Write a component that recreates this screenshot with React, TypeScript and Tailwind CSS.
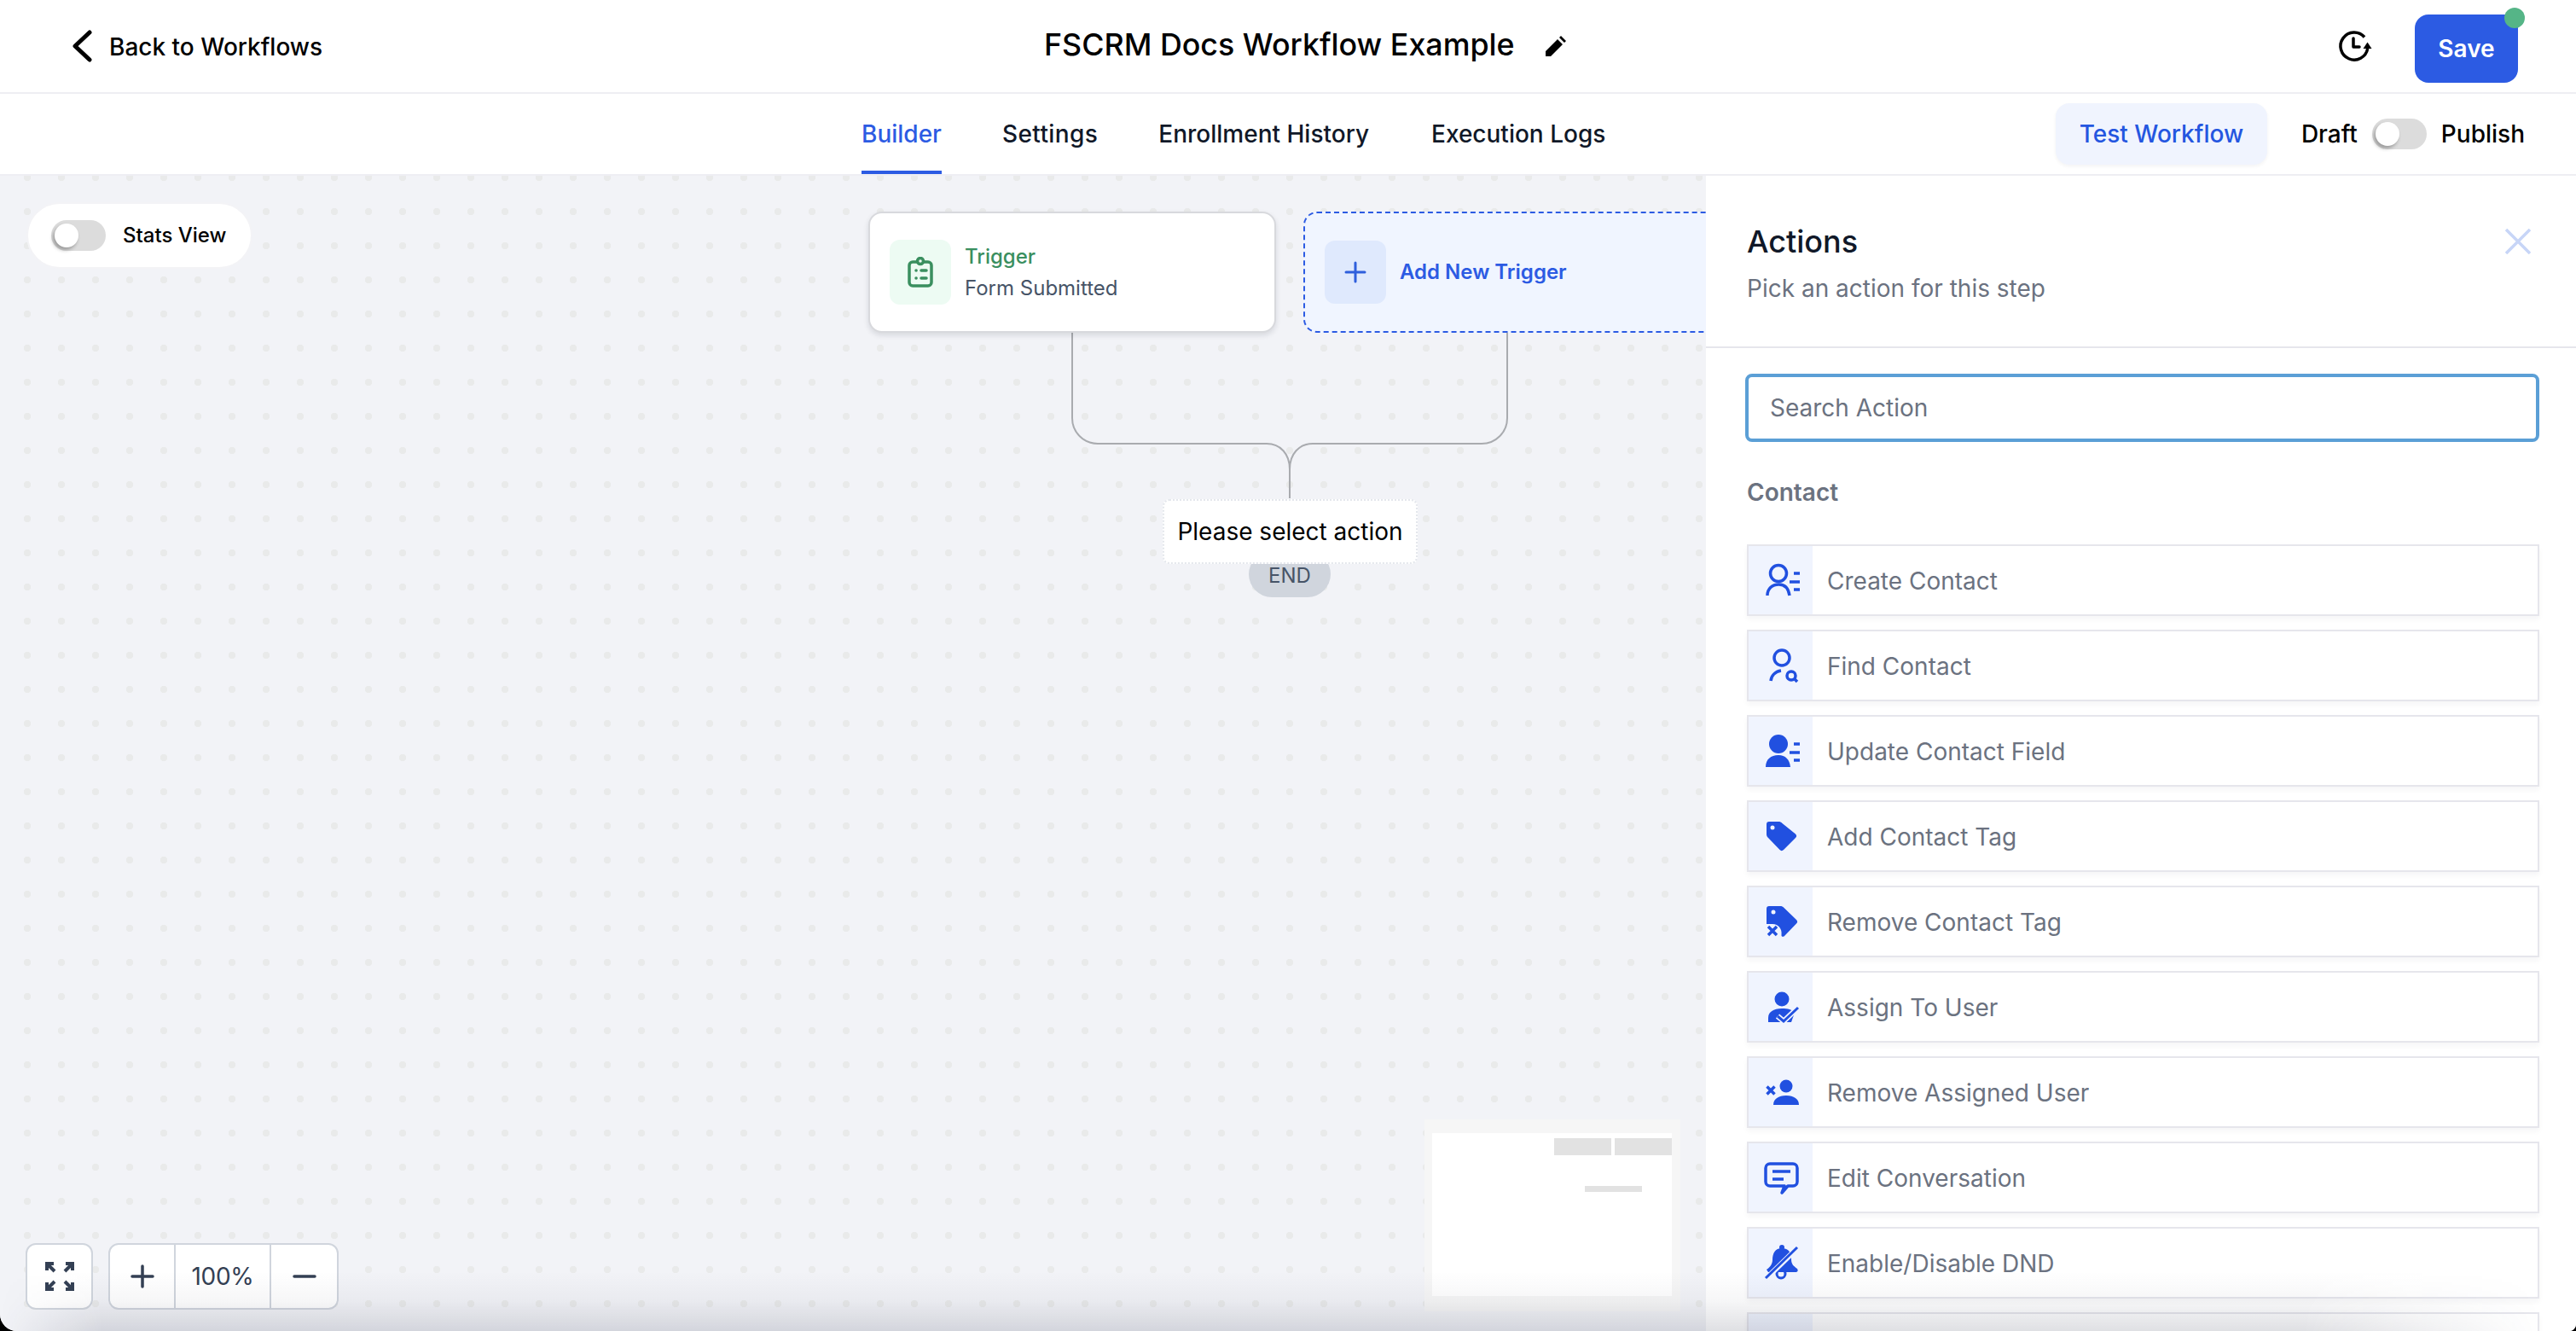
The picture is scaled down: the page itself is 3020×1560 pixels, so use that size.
import React from "react";

const BLUE = "#2150e0";
const CELL = "#f0f4fe";

function Toggle() {
  return (
    <div className="flex h-[36px] w-[64px] shrink-0 items-center rounded-full bg-[#dcdcdc] pl-[4px]">
      <div className="h-[28px] w-[28px] rounded-full bg-white shadow-[-2px_3px_4px_rgba(0,0,0,0.3)]" />
    </div>
  );
}

function Glyph({ children }: { children: React.ReactNode }) {
  return (
    <svg width="48" height="48" viewBox="0 0 48 48" fill="none" stroke={BLUE} strokeWidth="3.5">
      {children}
    </svg>
  );
}

const icons: Record<string, React.ReactNode> = {
  create: (
    <Glyph>
      <circle cx="21" cy="16" r="9.5" strokeWidth="3.5" />
      <path d="M8 42c0-8 5.500-13 13.500-13 6.500 0 11 3.500 12.500 13" />
      <path d="M39 16h7M34 26h12M39 35h7" />
    </Glyph>
  ),
  find: (
    <Glyph>
      <circle cx="25" cy="15" r="9" />
      <path d="M12 42c.500-6 5-11 12-12" />
      <circle cx="36" cy="36" r="5" />
      <path d="M39.500 39.500L43 43" />
    </Glyph>
  ),
  update: (
    <Glyph>
      <circle cx="21" cy="16" r="11" fill={BLUE} stroke="none" />
      <path d="M6 43c0-9 6-14 15-14 8 0 13 5 14 14z" fill={BLUE} stroke="none" />
      <path d="M39 16h7M34 26h12M39 35h7" />
    </Glyph>
  ),
  tag: (
    <Glyph>
      <path d="M10 7h11c2 0 3 .5 4.500 2L41 21.500c1.500 1.500 1.500 3 0 4.500L27 40c-1.500 1.500-3 1.500-4.500 0L9 26c-1.500-1.500-2-2.500-2-4.500V10c0-2 1-3 3-3z" fill={BLUE} stroke="none" />
      <circle cx="14" cy="14" r="2.500" fill={CELL} stroke="none" />
    </Glyph>
  ),
  untag: (
    <Glyph>
      <path d="M10 6h13c2 0 3 .5 4.500 2L42 22c1.500 1.500 1.500 3 0 4.500L28 41c-1.500 1.500-4 1-3.500-1.500C25.500 33 21 27 14 27H7V9c0-2 1-3 3-3z" fill={BLUE} stroke="none" />
      <circle cx="15" cy="13" r="2.500" fill={CELL} stroke="none" />
      <path d="M9 30l10 10M19 30L9 40" />
    </Glyph>
  ),
  assign: (
    <Glyph>
      <circle cx="25" cy="15" r="8.500" fill={BLUE} stroke="none" />
      <path d="M9 42v-5c0-7 6-11 16-11 7 0 12 1 15 5l-4 11z" fill={BLUE} stroke="none" />
      <path d="M20 35l7 6 17-16" stroke={CELL} strokeWidth="6.500" />
      <path d="M20 35l7 6 17-16" strokeWidth="3" />
    </Glyph>
  ),
  unassign: (
    <Glyph>
      <circle cx="30" cy="17" r="7.500" fill={BLUE} stroke="none" />
      <path d="M15 39c0-7 6-11 15-11s15 4 15 11z" fill={BLUE} stroke="none" />
      <path d="M7.500 17.500l9 9M16.500 17.500l-9 9" />
    </Glyph>
  ),
  edit: (
    <Glyph>
      <path d="M11 8h27a5 5 0 0 1 5 5v16a5 5 0 0 1-5 5h-6l-7 8 3-8H11a5 5 0 0 1-5-5V13a5 5 0 0 1 5-5z" strokeLinejoin="round" />
      <path d="M14 17h21M14 26h13" />
    </Glyph>
  ),
  dnd: (
    <Glyph>
      <circle cx="25" cy="6" r="3" fill={BLUE} stroke="none" />
      <path d="M25 7c-8 0-11 6-11 14 0 5-4 9-7 11l2 3h33c2-1 2-2 1-4-4-3-7-5-7-11 0-8-3-13-11-13z" fill={BLUE} stroke="none" />
      <circle cx="24" cy="37" r="5" strokeWidth="3" />
      <path d="M6 43L43 7" stroke={CELL} strokeWidth="6" />
      <path d="M6 42L43 6" strokeWidth="3" />
    </Glyph>
  ),
};

const rows: [string, string][] = [
  ["create", "Create Contact"],
  ["find", "Find Contact"],
  ["update", "Update Contact Field"],
  ["tag", "Add Contact Tag"],
  ["untag", "Remove Contact Tag"],
  ["assign", "Assign To User"],
  ["unassign", "Remove Assigned User"],
  ["edit", "Edit Conversation"],
  ["dnd", "Enable/Disable DND"],
];

function Row({ icon, label }: { icon?: string; label?: string }) {
  return (
    <div className="flex h-[84px] shrink-0 items-stretch border-2 border-[#e6e6ec] bg-white shadow-[0_4px_6px_rgba(16,24,40,0.04)]">
      <div className="flex w-[75px] shrink-0 items-center justify-center bg-[#f0f4fe]">{icon ? icons[icon] : null}</div>
      <div className="flex items-center pl-[17px] pt-[2px] text-[28px] text-[#6b7280]">{label}</div>
    </div>
  );
}

function Header() {
  return (
    <header className="flex h-[110px] shrink-0 items-center border-b-2 border-[#eeeef3] bg-white">
      <div className="flex w-[1224px] shrink-0 items-center gap-[20px] pl-[84px]">
        <svg width="24" height="38" viewBox="0 0 24 38" fill="none" stroke="#000" strokeWidth="5" strokeLinecap="round" strokeLinejoin="round">
          <path d="M21 3L4 19l17 16" />
        </svg>
        <span className="pt-[2px] text-[28px] font-medium text-black">Back to Workflows</span>
      </div>
      <h1 className="mb-[3px] text-[35.8px] font-medium text-black">FSCRM Docs Workflow Example</h1>
      <svg className="ml-[36px]" width="24" height="24" viewBox="0 0 24 24" fill="#000">
        <path d="M0 24v-6L14 4l6 6L6 24zM16 2l2-2 6 6-2 2z" />
      </svg>
      <div className="ml-auto flex items-center gap-[49px] pr-[68px]">
        <svg width="44" height="44" viewBox="0 0 44 44" fill="none" stroke="#000" strokeWidth="3.500">
          <path d="M34 11.500A16 16 0 1 0 37.700 25" />
          <path d="M21 13v10h7" strokeLinecap="round" strokeLinejoin="round" />
          <path d="M37.500 17.500l5 7.500h-10z" fill="#000" stroke="none" />
        </svg>
        <div className="relative mt-[6px]">
          <button className="h-[80px] w-[121px] rounded-[16px] bg-[#2c5be3] text-[28px] font-semibold text-white">Save</button>
          <span className="absolute right-[-8px] top-[-8px] h-[24px] w-[24px] rounded-full bg-[#55b587]" />
        </div>
      </div>
    </header>
  );
}

function Nav() {
  return (
    <nav className="flex h-[96px] shrink-0 items-stretch border-b-2 border-[#eeeef3] bg-white pl-[1010px]">
      <div className="flex text-[28px] font-medium text-[#101828]">
        <div className="mr-[71px] flex items-center border-b-[4px] border-[#2c5be3] pt-[4px] text-[#2c5be3]">Builder</div>
        <div className="mr-[71px] flex items-center tracking-[0.4px]">Settings</div>
        <div className="mr-[73px] flex items-center">Enrollment History</div>
        <div className="flex items-center">Execution Logs</div>
      </div>
      <div className="ml-auto flex items-center pr-[60px] text-[28px] font-medium text-black">
        <button className="mr-[40px] h-[72px] w-[248px] rounded-[16px] bg-[#f0f4fe] font-medium text-[#2456e0] shadow-[0_2px_4px_rgba(16,24,40,0.05)]">Test Workflow</button>
        <span className="mr-[17px]">Draft</span>
        <Toggle />
        <span className="ml-[17px]">Publish</span>
      </div>
    </nav>
  );
}

function Canvas() {
  return (
    <main className="relative flex-1 overflow-hidden bg-[#f2f3f7] bg-[radial-gradient(circle,#e9eaea_4px,transparent_4.500px)] bg-[length:40px_40px] bg-[position:12px_-18px]">
      <div className="absolute left-[31px] top-[31px] flex h-[78px] w-[265px] items-center gap-[20px] rounded-full border-2 border-[#f3f3f6] bg-white pl-[27px]">
        <Toggle />
        <span className="text-[24px] font-medium text-black">Stats View</span>
      </div>

      <svg className="absolute left-[1240px] top-[180px]" width="540" height="210" fill="none" stroke="#a9abaf" strokeWidth="2">
        <path d="M17 0v104a30 30 0 0 0 30 30h198c16 0 27 12 27 30v34" />
        <path d="M527 0v104a30 30 0 0 1-30 30H299c-16 0-27 12-27 30v34" />
      </svg>

      <div className="absolute left-[1018px] top-[42px] flex h-[142px] w-[478px] items-center gap-[16px] rounded-[16px] border-2 border-[#d8d9dd] bg-white pl-[23px] shadow-[0_3px_6px_rgba(16,24,40,0.12)]">
        <div className="flex h-[76px] w-[72px] items-center justify-center rounded-[12px] bg-[#edfbf3]">
          <svg width="30" height="36" viewBox="0 0 30 36" fill="none" stroke="#3a8f5f" strokeWidth="3.500" strokeLinecap="round">
            <rect x="2" y="6" width="26" height="28" rx="4" />
            <circle cx="15" cy="5" r="3.500" fill="#edfbf3" />
            <path d="M10 16h.1M16 16h6M10 25h.1M16 25h6" />
          </svg>
        </div>
        <div className="flex flex-col gap-[7px]">
          <span className="text-[24px] font-medium leading-[30px] text-[#3a8f5f]">Trigger</span>
          <span className="text-[24px] leading-[30px] text-[#475467]">Form Submitted</span>
        </div>
      </div>

      <div className="absolute left-[1528px] top-[42px] flex h-[142px] w-[500px] items-center gap-[16px] rounded-[16px] border-2 border-dashed border-[#2c5be3] bg-[#f0f5ff] pl-[23px]">
        <div className="flex h-[74px] w-[72px] items-center justify-center rounded-[12px] bg-[#dfe9fd]">
          <svg width="26" height="26" viewBox="0 0 26 26" stroke="#2f5fdc" strokeWidth="3" strokeLinecap="round">
            <path d="M13 2v22M2 13h22" />
          </svg>
        </div>
        <span className="text-[24px] font-semibold text-[#2c5be3]">Add New Trigger</span>
      </div>

      <div className="absolute left-[1464px] top-[440px] flex h-[54px] w-[96px] items-end justify-center rounded-full bg-[#d0d5dd] pb-[10px] text-[24px] leading-[30px] text-[#475467]">END</div>
      <div className="absolute left-[1363px] top-[379px] flex h-[76px] w-[299px] items-center justify-center rounded-[8px] border-2 border-dotted border-[#e4e7ec] bg-white text-[28px] text-black">Please select action</div>

      <div className="absolute left-[1670px] top-[1106px] h-[225px] w-[300px] bg-[#f6f6f6] pl-[9px] pt-[16px]">
        <div className="relative h-[191px] w-[281px] bg-white">
          <div className="absolute left-[143px] top-[6px] h-[20px] w-[67px] bg-[#e2e2e2]" />
          <div className="absolute left-[214px] top-[6px] h-[20px] w-[67px] bg-[#e2e2e2]" />
          <div className="absolute left-[179px] top-[62px] h-[7px] w-[67px] bg-[#e2e2e2]" />
        </div>
      </div>

      <div className="absolute bottom-[25px] left-[30px] flex gap-[18px] text-[#344054]">
        <button className="flex h-[78px] w-[79px] items-center justify-center rounded-[12px] border-2 border-[#d0d5dd] bg-white">
          <svg width="36" height="36" viewBox="0 0 36 36" fill="none" stroke="#344054" strokeWidth="4">
            <path d="M3 11V3h8M3 3l9 9M25 3h8v8M33 3l-9 9M3 25v8h8M3 33l9-9M25 33h8v-8M33 33l-9-9" />
          </svg>
        </button>
        <div className="flex h-[78px] w-[270px] items-stretch rounded-[12px] border-2 border-[#d0d5dd] bg-white">
          <div className="flex w-[77px] items-center justify-center border-r-2 border-[#d0d5dd]">
            <svg width="28" height="28" viewBox="0 0 28 28" stroke="#344054" strokeWidth="3.500" strokeLinecap="round">
              <path d="M14 2v24M2 14h24" />
            </svg>
          </div>
          <div className="flex w-[112px] items-center justify-center border-r-2 border-[#d0d5dd] text-[28px] tracking-[-0.3px]">100%</div>
          <div className="flex flex-1 items-center justify-center">
            <svg width="28" height="28" viewBox="0 0 28 28" stroke="#344054" strokeWidth="3.500" strokeLinecap="round">
              <path d="M2 14h24" />
            </svg>
          </div>
        </div>
      </div>
    </main>
  );
}

function Panel() {
  return (
    <aside className="flex w-[1020px] shrink-0 flex-col overflow-hidden bg-white">
      <div className="relative flex h-[202px] shrink-0 flex-col border-b-2 border-[#e6e6ec] pl-[48px] pt-[57px]">
        <h2 className="text-[36px] font-medium leading-[40px] text-[#101828]">Actions</h2>
        <p className="mt-[18px] text-[28px] leading-[34px] text-[#6b7280]">Pick an action for this step</p>
        <svg className="absolute left-[937px] top-[62px]" width="30" height="30" viewBox="0 0 30 30" stroke="#c7d5f7" strokeWidth="3.500">
          <path d="M1 1l28 28M29 1L1 29" />
        </svg>
      </div>
      <div className="flex flex-col pl-[46px] pr-[43px] pt-[30px]">
        <input
          placeholder="Search Action"
          readOnly
          className="h-[80px] w-[931px] shrink-0 rounded-[8px] border-4 border-[#5b9fd6] bg-white pl-[25px] text-[28px] outline-none placeholder:text-[#6b7280]"
        />
        <div className="mt-[42px] pl-[2px] text-[28px] font-semibold leading-[34px] text-[#6b7280]">Contact</div>
        <div className="mt-[44px] flex flex-col gap-[16px] pl-[2px]">
          {rows.map(([i, l]) => (
            <Row key={l} icon={i} label={l} />
          ))}
          <Row />
        </div>
      </div>
    </aside>
  );
}

export default function App() {
  return (
    <div className="h-[1560px] w-[3020px] overflow-hidden bg-black [font-family:Inter,sans-serif]">
      <div className="relative flex h-full flex-col overflow-hidden rounded-bl-[20px] rounded-br-[8px] bg-white">
        <Header />
        <Nav />
        <div className="flex min-h-0 flex-1">
          <Canvas />
          <Panel />
        </div>
        <div className="pointer-events-none absolute inset-x-0 bottom-0 h-[70px] bg-[linear-gradient(to_top,rgba(30,35,60,0.14),rgba(30,35,60,0.04)_50%,transparent)] [mask-image:linear-gradient(to_right,transparent,black_120px,black_2700px,transparent_2980px)]" />
      </div>
    </div>
  );
}
